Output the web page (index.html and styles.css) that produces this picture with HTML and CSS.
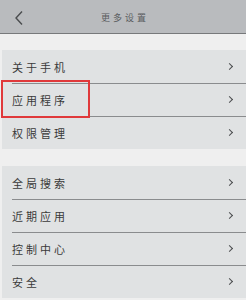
FILE: index.html
```html
<!DOCTYPE html>
<html lang="zh">
<head>
<meta charset="utf-8">
<link rel="stylesheet" href="styles.css">
</head>
<body>
<div class="screen">
  <header class="topbar">
    <svg class="back" width="12" height="16" viewBox="0 0 12 16"><path d="M9 1.5 L3 8 L9 14.5" fill="none" stroke="#4a4c4e" stroke-width="1.4"/></svg>
    <div class="title">更多设置</div>
  </header>
  <div class="gap"></div>
  <section class="group">
    <div class="row"><span class="label">关于手机</span><span class="chev"></span></div>
    <div class="row"><span class="label">应用程序</span><span class="chev"></span></div>
    <div class="row"><span class="label">权限管理</span><span class="chev"></span></div>
  </section>
  <div class="gap gap2"></div>
  <section class="group">
    <div class="row"><span class="label">全局搜索</span><span class="chev"></span></div>
    <div class="row"><span class="label">近期应用</span><span class="chev"></span></div>
    <div class="row"><span class="label">控制中心</span><span class="chev"></span></div>
    <div class="row"><span class="label">安全</span><span class="chev"></span></div>
  </section>
  <div class="highlight"></div>
</div>
</body>
</html>
```
FILE: styles.css
```css
* { box-sizing: border-box; }
html, body { margin: 0; padding: 0; }
body { background: #efefef; font-family: "Noto Sans CJK SC", "Noto Sans", sans-serif; }
.screen { position: relative; width: 246px; height: 300px; overflow: hidden; background: #efefef; }
.topbar {
  height: 34px; background: #b9bbbe; border-bottom: 1px solid #77797b;
  display: flex; align-items: center; justify-content: center; position: relative;
}
.back { position: absolute; left: 13px; top: 10px; }
.title { font-size: 9px; letter-spacing: 3px; color: #5a5c5e; margin-left: 4px; margin-top: 1px; }
.gap { height: 16px; }
.gap2 { height: 17px; }
.group { background: #e0e2e3; margin-left: 2px; }
.row {
  height: 33px; display: flex; align-items: center; justify-content: space-between;
  padding: 0 12px 0 10px; position: relative;
}
.row + .row::before {
  content: ""; position: absolute; left: 10px; right: 0; top: 0; height: 1px; background: #8a8c8e;
}
.label { font-size: 11px; letter-spacing: 3px; color: #3a3a3a; }
.chev {
  width: 5px; height: 5px; border-top: 1.4px solid #4a4c4e; border-right: 1.4px solid #4a4c4e;
  transform: rotate(45deg); margin-right: 2px;
}
.highlight {
  position: absolute; left: 1px; top: 80px; width: 89px; height: 38px;
  border: 2px solid #e0393b;
}
```
